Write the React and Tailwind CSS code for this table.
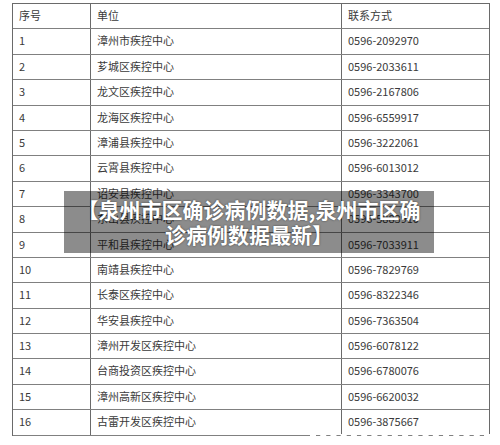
import React from "react";

const rows = [
  ["1", "漳州市疾控中心", "0596-2092970"],
  ["2", "芗城区疾控中心", "0596-2033611"],
  ["3", "龙文区疾控中心", "0596-2167806"],
  ["4", "龙海区疾控中心", "0596-6559917"],
  ["5", "漳浦县疾控中心", "0596-3222061"],
  ["6", "云霄县疾控中心", "0596-6013012"],
  ["7", "诏安县疾控中心", "0596-3343700"],
  ["8", "东山县疾控中心", "0596-5883910"],
  ["9", "平和县疾控中心", "0596-7033911"],
  ["10", "南靖县疾控中心", "0596-7829769"],
  ["11", "长泰区疾控中心", "0596-8322346"],
  ["12", "华安县疾控中心", "0596-7363504"],
  ["13", "漳州开发区疾控中心", "0596-6078122"],
  ["14", "台商投资区疾控中心", "0596-6780076"],
  ["15", "漳州高新区疾控中心", "0596-6620032"],
  ["16", "古雷开发区疾控中心", "0596-3875667"],
];

function Row({ cells }) {
  return (
    <div className="grid grid-cols-[78px_251px_148px] h-[25.4px] border-b border-[#808080]">
      <div className="pl-[6px] pt-[3px] border-r border-[#6a6a6a]">{cells[0]}</div>
      <div className="pl-[6px] pt-[3px] border-r border-[#6a6a6a]">{cells[1]}</div>
      <div className="pl-[6px] pt-[3px]">{cells[2]}</div>
    </div>
  );
}

export default function App() {
  return (
    <div className="relative w-[500px] h-[445px] bg-white overflow-hidden">
      <div
        className="ml-[12px] mt-[3px] w-[478px] border-t border-l border-r border-[#6a6a6a] text-[11px] leading-[16px] text-[#3a3a3a]"
        style={{ fontFamily: '"Noto Sans CJK SC", "Noto Sans", sans-serif' }}
      >
        <Row cells={["序号", "单位", "联系方式"]} />
        {rows.map((r) => (
          <Row key={r[0]} cells={r} />
        ))}
      </div>
      <div className="absolute left-[310px] top-[434px] w-[180px] border-t-[2px] border-dashed border-white" />
      <div
        className="absolute left-[64px] top-[191px] w-[370px] h-[62px] bg-[rgba(0,0,0,0.45)] flex flex-col items-center justify-center text-white font-bold text-[21px] leading-[25px] text-center"
        style={{ fontFamily: '"Noto Sans CJK SC", sans-serif', textShadow: "0 0 2px rgba(0,0,0,0.6)" }}
      >
        <div className="whitespace-nowrap">【泉州市区确诊病例数据,泉州市区确</div>
        <div className="whitespace-nowrap">诊病例数据最新】</div>
      </div>
    </div>
  );
}
